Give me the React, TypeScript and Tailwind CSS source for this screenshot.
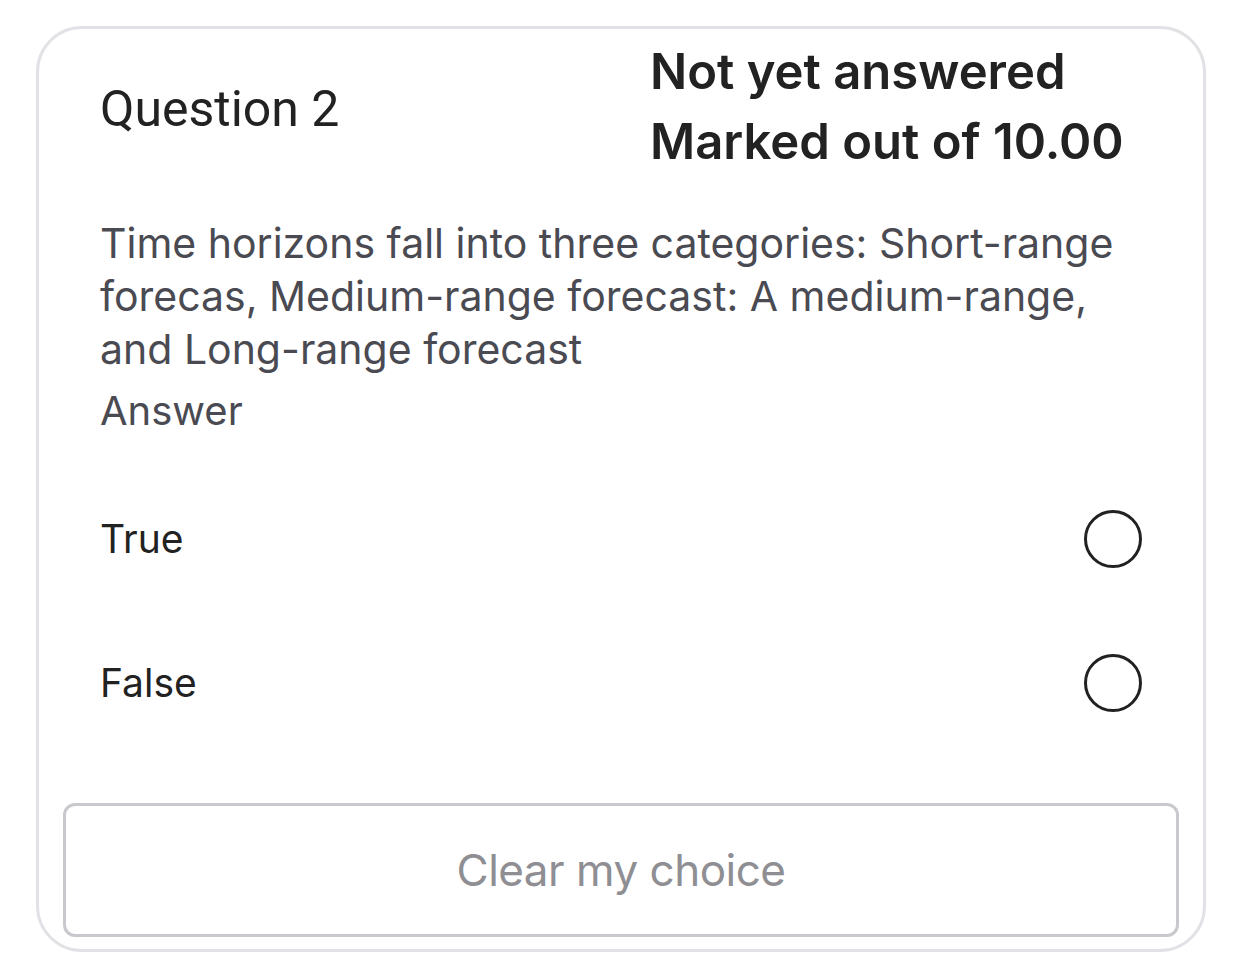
import React from 'react';

const Radio = () => (
  <span className="w-[58px] h-[58px] rounded-full border-[3px] border-[#222] block shrink-0" />
);

export default function App() {
  const options = ['True', 'False'];

  return (
    <div className="w-[1242px] h-[974px] bg-white pt-[26px] pl-[36px]" style={{ fontFamily: 'Inter, "Noto Sans", sans-serif' }}>
      <div className="w-[1170px] h-[926px] border-[3px] border-[#e2e2e6] rounded-[46px] pt-[8px] px-[61px] flex flex-col">
        {/* header */}
        <div className="flex items-start">
          <div className="w-[550px] pt-[44px] text-[50px] leading-[56px] text-[#222]" style={{ fontFamily: 'Roboto, sans-serif' }}>
            Question 2
          </div>
          <div className="text-[49px] leading-[70px] font-semibold text-[#222]">
            <div>Not yet answered</div>
            <div>Marked out of 10.00</div>
          </div>
        </div>

        {/* question text */}
        <div className="mt-[40px] text-[41px] leading-[53px] text-[#4a4a52]">
          Time horizons fall into three categories: Short-range forecas, Medium-range forecast: A medium-range, and Long-range forecast
        </div>
        <div className="mt-[8px] text-[40px] leading-[53px] text-[#4a4a52]">Answer</div>

        {/* options */}
        <div className="mt-[30px] flex flex-col">
          {options.map((o) => (
            <div key={o} className="h-[144px] flex items-center justify-between">
              <span className="text-[39px] text-[#222]">{o}</span>
              <Radio />
            </div>
          ))}
        </div>

        {/* clear button */}
        <div className="mt-[48px] -mx-[37px] h-[134px] border-[3px] border-[#c9c9cd] rounded-[12px] flex items-center justify-center text-[44px] text-[#8e8e93] tracking-[-0.5px]">
          Clear my choice
        </div>
      </div>
    </div>
  );
}
